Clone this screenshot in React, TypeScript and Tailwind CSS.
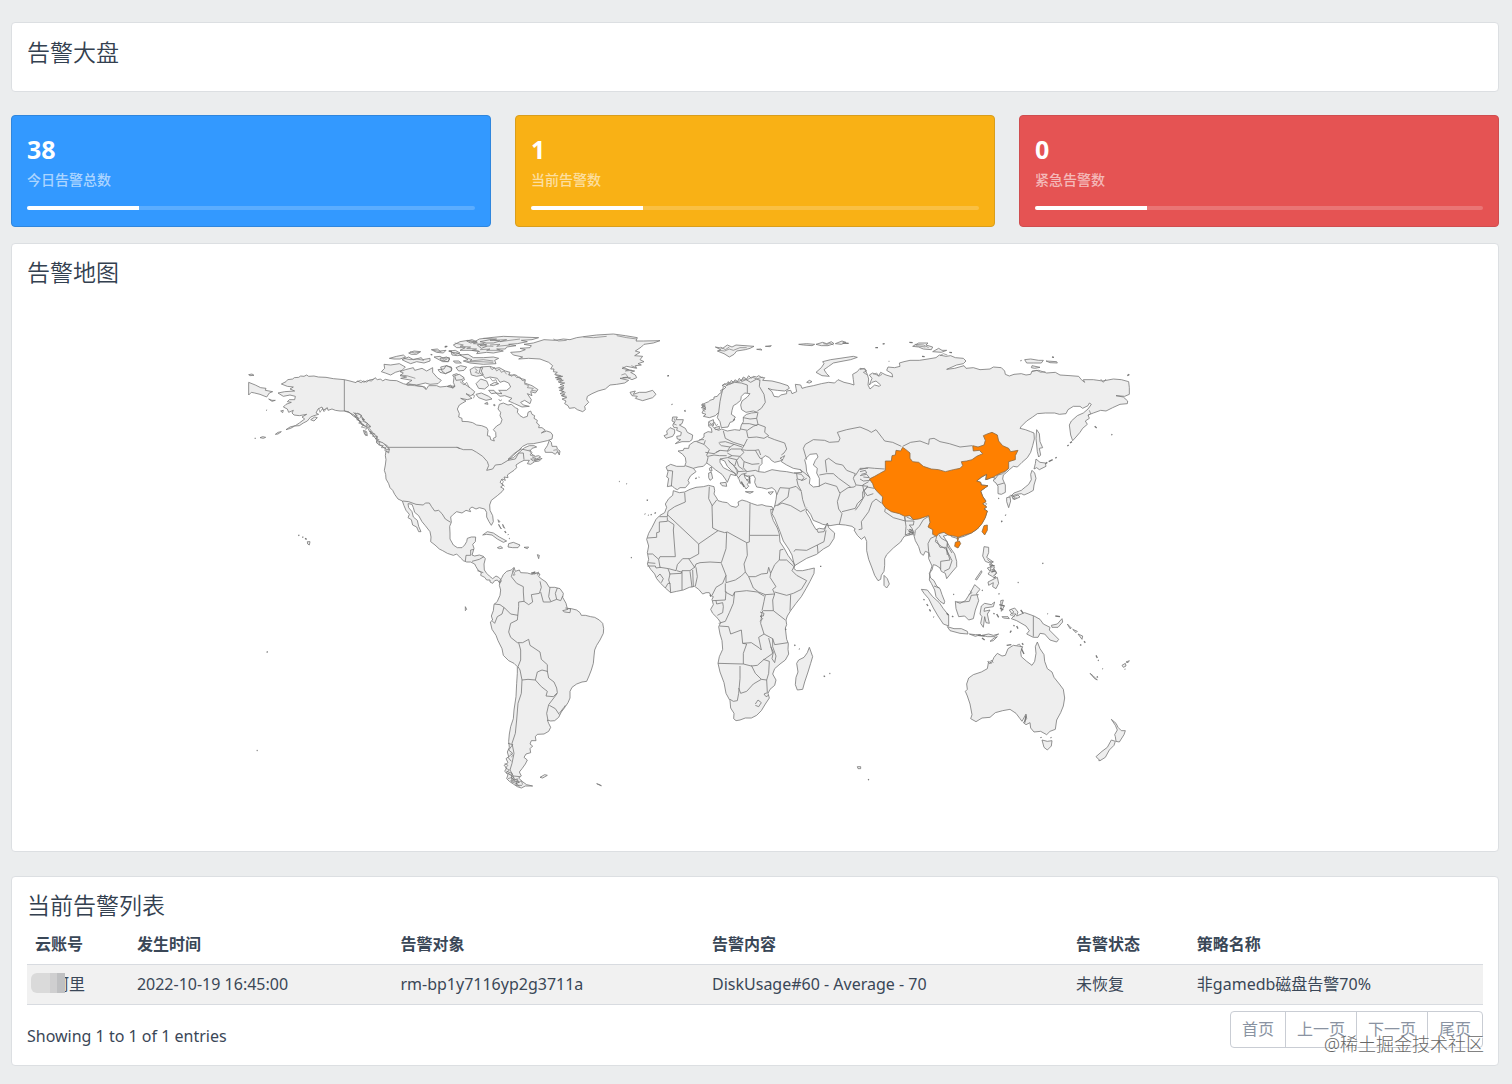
import React from "react";

type Sheet = "A" | "B" | "C" | "D" | "E" | "F" | "G";
type Run = [Sheet, string];

/* Origin of each map sheet in the coordinate space of the whole drawing. */
const ORIGIN: Record<Sheet, [number, number]> = {
  A: [0, 0],
  B: [600, 0],
  C: [1200, 0],
  D: [1860, 0],
  E: [600, 645],
  F: [1200, 465],
  G: [1830, 525],
};

function trace(...runs: Run[]): string {
  return runs
    .flatMap(([sheet, points]) =>
      points
        .trim()
        .split(/\s+/)
        .map((p) => {
          const [x, y] = p.split(",").map(Number);
          return `${x + ORIGIN[sheet][0]} ${y + ORIGIN[sheet][1]}`;
        }),
    )
    .join("L");
}

const MAINLANDS: Run[][] = [
  // North and Central America
  [
    ["A", "124,177 138,170 143,164 158,162 163,158 176,157 182,153 192,154 200,150 206,154 222,153 235,156 258,157 280,161 313,164 330,168 348,173 352,168 364,173 370,168 380,171 388,165 400,163 405,158 412,164 422,162 428,168 436,163 450,166 470,167 490,176 505,180 520,176 530,182 555,186 558,194 566,182 590,182 600,186 620,184 636,188 645,183"],
    ["B", "22,184 32,180 38,190 45,184 40,172 42,158 38,150 50,146 60,152 70,157 74,164 66,168 72,176 84,184 92,190 104,200 100,208 92,212 78,206 96,220 82,224 62,220 78,228 68,234 58,240 52,252 58,266 56,276 66,280 66,289 84,290 98,293 110,300 125,302 140,308 144,316 142,332 150,334 152,344 163,348 160,340 168,336 167,322 160,314 170,303 182,296 186,284 180,272 182,262 174,252 178,238 190,234 204,240 214,238 226,248 234,252 232,262 240,272 250,278 262,274 264,262 272,258 276,268 284,272 282,280 292,286 290,294 298,300 296,308 306,308 316,316 304,324 320,318 332,322 338,330 336,342 322,347 300,352 280,356 262,357 248,364 236,376 222,386 204,403 220,398 240,380 254,368 268,362 282,362 290,366 276,370 270,378 276,388 286,394 296,392 302,396 290,402 272,402 280,408 294,404 306,400 298,408 284,410 272,418 262,416 268,406 252,406 240,412 228,420 230,428 222,436 210,444 202,450 204,458 192,456 196,466 186,462 180,472 190,480 182,486 192,492 186,500 172,512 154,526 149,540 150,556 158,572 160,590 154,601 147,590 140,576 140,562 134,552 118,548 108,552 96,546 88,552 92,560 78,556 66,564 50,560 40,568 32,576 34,592 29,604 30,624 30,642 40,660 52,668 66,668 74,660 80,650 82,640 94,636 107,636 106,650 98,658 102,670 98,684"],
    ["E", "96,45 104,48 118,45 130,49 136,56 132,72 133,90 140,100 148,108 158,116 168,108 176,112 182,118 184,124 178,128 172,120 164,122 158,130 150,126 150,120 140,120 134,112 122,106 124,98 114,90 108,80 104,72 92,66 80,66 70,62 62,54 50,42 40,46 22,40 8,32 0,28"],
    ["A", "598,672 585,660 572,650 573,636 570,620 556,602 546,590 536,572 524,562 520,548 516,538 504,536 506,548 516,560 520,576 532,586 536,604 543,620 536,620 530,606 518,600 514,584 504,578 508,568 498,556 492,542 487,528 474,522 464,508 458,496 450,488 446,476 438,462 437,448 433,436 436,420 438,404 436,392 438,378 446,384 448,372 442,362 430,356 418,350 410,346 412,338 400,330 390,322 384,310 376,304 366,300 360,288 354,284 342,270 330,264 314,258 300,258 286,256 276,252 264,256 262,248 250,256 246,246 234,252 228,264 236,268 222,272 212,276 202,288 190,294 178,302 164,303 152,310 138,314 150,306 166,302 178,294 194,282 186,276 200,268 178,272 162,270 156,264 160,256 146,262 142,252 130,246 138,238 154,232 142,230 148,224 164,224 166,214 150,210 130,214 114,204 134,200 164,198 150,192 160,186 142,184"],
  ],
  // South America
  [["E", "180,122 186,112 190,104 200,94 214,90 222,82 226,94 238,90 242,98 262,99 276,103 290,99 300,102 296,110 306,118 318,126 328,142 344,142 360,146 370,160 368,172 378,190 382,206 394,206 410,210 420,218 424,226 436,226 452,230 464,232 478,240 488,250 491,266 490,280 480,300 470,316 464,330 462,348 460,370 454,390 447,408 440,424 426,426 410,432 396,442 390,454 390,474 384,488 376,500 364,516 356,532 344,542 332,543 322,540 326,550 332,562 326,574 312,582 292,583 286,590 288,602 274,602 270,612 278,618 270,626 272,638 258,642 252,652 262,660 256,672 246,686 238,696 244,708 236,714 246,724 260,734 278,738 256,738 244,744 232,740 220,732 208,724 200,716 204,704 194,694 200,684 192,676 204,668 198,656 206,650 202,636 208,622 206,604 208,582 212,560 220,536 222,510 228,470 230,430 232,400 232,380 222,370 206,362 190,346 186,326 174,302 168,286 156,268 151,246 158,240 154,228 160,212 162,194 172,184 180,166 182,150 178,136"]],
  // Africa
  [["F", "100,32 118,38 134,36 150,28 168,22 190,20 206,16 222,20 224,32 222,42 230,54 234,62 248,66 262,68 272,78 288,82 296,76 294,66 306,60 320,64 334,70 352,76 366,74 378,78 396,80 400,90 392,88 394,104 400,122 412,144 418,162 420,186 432,204 444,226 460,248 464,256 462,266 470,272 488,272 506,268 523,264 522,280 510,304 498,326 484,350 468,370 452,392 442,408 438,420 440,434 436,444 438,462 440,478 445,490 444,508 446,522 436,540 420,552 404,566 398,582 408,600 404,616 390,628 384,640 388,654 376,672 364,692 350,706 334,714 316,714 300,720 288,722 281,716 282,700 272,684 270,662 258,640 252,608 240,576 234,550 238,530 248,508 246,482 240,462 236,440 242,428 234,416 218,400 212,388 220,374 216,358 220,350 212,346 208,338 198,338 188,342 176,328 164,319 148,322 130,330 110,334 92,338 76,324 62,310 50,296 44,282 32,268 22,252 26,238 22,218 26,198 20,178 26,160 36,142 48,118 60,106 74,98 80,82 76,72 86,56 98,46"]],
  // Europe and Asia
  [
    ["C", "104,490 96,482 82,485 86,460 80,456 84,440 78,426 92,418 110,424 134,424 138,412 136,398 128,388 114,378 130,376 132,370 146,370 148,360 162,350 174,348 182,344 192,336 192,326 204,320 216,322 214,310 206,304 206,290 220,284 222,296 218,304 226,312 236,316 244,312 262,318 284,314 300,316 304,300 310,290 310,276 320,268 334,264 352,262 340,258 318,262 305,254 302,240 306,228 322,216 330,206 314,204 304,214 302,226 290,236 280,242 276,256 274,268 286,276 278,290 270,292 264,306 244,308 240,290 232,278 236,262 226,272 208,278 190,274 198,268 186,264 190,256 198,252 184,248 196,244 184,240 196,234 206,230 210,226 222,222 222,216 232,214 236,208 244,202 242,196 252,192 258,186 246,182 254,176 260,180 264,178 264,170 270,174 274,166 280,172 286,164 292,170 298,160 304,168 310,156 320,162 326,152 334,160 340,154 350,156 356,152 366,158 374,158 368,166 396,168 420,174 444,182 448,190 434,198 412,196 396,194 384,190 396,200 402,214 416,216 422,210 440,206 440,198 452,196 456,206 470,200 468,190 466,178 482,180 486,190 500,186 520,182 544,176 566,172 584,174 594,164 612,172 630,176 642,180 640,164 638,148 652,140 660,130 674,132 682,148 686,162 684,180 690,192"],
    ["D", "44,180 58,184 62,180 48,168 36,172 28,180 36,160 28,150 38,144 56,152 62,142 78,150 98,156 96,146 80,136 84,126 104,128 120,124 118,114 132,110 150,106 178,106 204,102 228,98 238,90 258,94 272,92 286,98 310,100 318,108 310,116 290,120 260,133 284,130 312,122 318,130 340,128 360,134 390,132 400,126 424,128 434,138 436,148 448,153 462,148 484,146 498,150 512,148 516,138 536,136 560,144 586,142 600,150 630,152 656,154 664,164 674,172 670,164 700,164 728,168 760,162 784,164 806,170 808,188 808,208 794,214 768,212 790,216 803,228 802,236 780,238 758,248 738,258 722,256 700,264 684,270 688,280 676,288 682,298 668,310 660,322 648,336 638,347 632,330 628,300 634,288 652,272 670,264 684,252 694,238 688,234 684,242 668,250 660,244 640,244 624,254 618,266 598,268 584,264 556,264 532,266 518,276 500,288 484,304 480,310 496,314 512,320 522,324 523,342 518,362 512,382 502,398 486,412 472,426 460,424 448,434 440,442 430,450 428,462 436,480 436,502 424,508 414,506 414,484 408,474 400,468 404,458 394,456 384,462 376,464 380,448 366,456 350,468 362,472 364,480 384,482 376,488 362,498 368,514 378,528 368,536 380,546 372,552 382,558 376,576 366,594 352,612 334,624 312,634 290,640"],
    ["G", "318,114 304,110 300,98 290,106 280,108 288,120 300,142 314,162 320,184 320,200 306,216 290,236 286,220 274,214 270,204 258,196 250,194 246,210 238,220 242,234 252,242 260,258 270,266 276,284 284,304 282,312 270,304 258,290 254,270 244,250 238,240 240,216 246,198 236,176 236,158 226,154 220,166 212,160 206,140 196,122 190,100 176,106 164,108 158,116 152,126 130,144 110,164 104,176 104,196 102,214 94,226 92,238 84,242 74,226 66,204 56,178 50,152 50,124 44,110 34,118 22,106 12,90"],
    ["C", "646,612 636,604 616,600 594,598 570,602 548,598 540,594 520,586 512,568 500,552 498,560 510,580 516,594 528,614 538,610 552,612 558,602 562,594 566,608 584,624 582,640 568,662 550,672 530,688 500,700 480,712 464,722 460,708 456,690 446,672 430,648 420,620 412,600 404,580 396,566 400,552 404,544 408,524 410,508 406,496 396,488 380,492 364,488 350,486 344,472 346,460 340,450 326,456 312,448 316,460 328,470 322,478 326,484 318,492 310,478 302,476 296,460 288,448 274,436 262,424 254,408 240,402 240,412 250,428 262,434 284,444 288,452 272,448 268,458 262,472 256,462 246,448 226,434 212,422 200,414 190,424 174,426 160,430 168,440 152,452 144,466 148,474 136,488 120,488 112,494"],
  ],
  // Greenland
  [["B", "212,82 240,80 256,74 240,70 270,68 274,62 252,58 280,54 312,44 346,46 370,42 390,44 410,38 438,34 470,30 520,27 556,32 592,38 588,48 610,48 660,47 640,54 612,58 604,66 586,78 600,82 584,92 608,94 600,104 612,110 594,116 604,120 586,122 590,130 560,124 546,130 584,138 572,142 586,150 590,158 576,164 562,158 540,160 566,166 554,174 530,178 510,180 496,192 474,198 456,206 442,214 440,224 446,232 434,244 436,254 428,260 412,254 404,248 388,250 384,242 374,236 378,228 366,222 380,218 364,212 374,208 360,206 372,200 358,196 370,192 356,188 372,182 360,178 374,174 356,172 370,166 350,164 364,160 346,158 368,154 350,152 344,148 352,142 340,140 342,132 332,132 338,122 326,112 300,102 266,100 236,102 248,96 220,90"]],
  // Australia
  [["G", "562,426 570,446 582,464 584,484 592,506 606,516 612,532 628,552 640,568 644,594 640,618 632,638 620,660 616,688 600,694 590,704 572,694 552,696 542,684 540,668 528,674 520,668 530,656 528,642 516,664 510,656 498,640 480,628 458,632 436,638 420,652 396,654 378,665 362,656 366,644 360,612 352,588 346,574 352,568 350,552 356,534 370,524 394,516 412,506 416,484 424,490 432,472 442,460 456,468 466,466 474,446 490,436 518,440 512,456 514,470 530,484 546,496 554,484 558,460 556,440"]],
  // Madagascar
  [["F", "508,502 518,530 512,550 504,576 494,606 488,628 472,630 466,614 468,592 474,576 470,550 476,540 492,532 502,518"]],
];

const ISLANDS: Run[] = [
  // Bering Strait and Alaska
  ["A", "26,172 46,180 62,188 78,190 76,196 98,200 88,204 80,216 60,208 44,204 34,202 26,210"],
  ["A", "86,222 96,226 106,226 96,229"],
  ["A", "122,258 130,256 128,263"],
  ["A", "212,284 224,276 232,278 222,288"],
  ["A", "106,328 114,322 124,320 114,327"],
  ["A", "26,149 36,147 42,151 30,152"],
  ["A", "60,338 68,335 77,337 70,340"],
  ["A", "344,264 360,268 372,284 366,282 378,292 392,304 386,308 370,300 356,284"],
  ["A", "370,316 380,320 382,332 374,328"],
  ["A", "390,318 402,326 412,336 408,342 398,330"],
  ["A", "410,346 430,354 448,374 440,374 420,360 410,354"],
  // Arctic archipelago, west
  ["A", "432,118 452,120 478,116 496,126 486,136 466,142 452,150 436,144 424,140 434,130"],
  ["A", "496,134 520,128 524,136 546,130 560,138 578,128 578,142 592,158 604,166 594,176 570,178 556,174 530,180 500,176 516,166 482,160 500,156 480,152 490,144 480,140"],
  ["A", "448,100 470,94 490,90 497,96 480,102 462,102"],
  ["A", "486,104 506,96 520,104 544,98 548,104 570,100 570,108 552,114 530,110 512,116 498,110"],
  ["A", "506,84 522,78 542,80 530,88 514,88"],
  ["A", "574,74 592,72 600,78 618,76 610,84 590,82"],
  ["A", "582,96 600,94 610,100 628,98 626,110 608,110"],
  ["A", "594,134 612,132 618,122 634,126 634,138 616,146 600,142"],
  ["A", "628,78 646,76 660,84 646,88"],
  // Arctic archipelago, east
  ["B", "40,60 60,50 84,46 104,50 118,42 150,38 190,34 240,36 296,38 276,44 244,46 262,50 232,56 206,58 228,62 200,66 196,72 170,72 190,78 160,84 140,82 110,86 116,78 90,76 60,76 76,68 50,68"],
  ["B", "80,48 96,44 110,50 92,54"],
  ["B", "112,60 132,56 140,64 124,70"],
  ["B", "120,50 150,44 180,48 160,54 140,54"],
  ["B", "60,90 84,88 100,98 130,98 160,96 176,100 164,106 168,116 130,118 90,114 70,108 84,104"],
  ["B", "0,100 20,96 30,102 22,110 4,106"],
  ["B", "34,82 52,84 64,90 52,92 36,90"],
  ["B", "40,108 56,108 64,114 46,114"],
  ["B", "48,128 62,122 80,126 72,136 56,138"],
  ["B", "2,126 20,122 36,130 34,138 16,146 6,138"],
  ["B", "44,152 58,148 72,158 66,164 48,166"],
  ["B", "90,134 104,126 128,128 124,138 130,150 110,154 94,150"],
  ["B", "122,126 150,124 166,130 178,128 196,138 210,142 206,150 228,150 240,160 256,164 254,174 276,182 294,194 286,204 272,200 276,212 262,206 274,224 270,236 254,226 242,232 250,240 268,244 246,246 224,236 206,228 216,220 194,212 180,214 168,204 186,206 176,196 200,196 212,186 206,174 192,168 180,172 172,160 150,156 136,160 130,152 118,142"],
  ["B", "108,176 122,162 140,168 146,182 134,192 116,190"],
  ["B", "150,180 164,172 176,176 160,182"],
  ["B", "108,208 124,204 146,214 156,222 138,226 116,218"],
  ["B", "146,196 162,196 168,204 154,206"],
  ["B", "134,236 142,232 144,238"],
  ["B", "160,240 164,238 165,243"],
  // Newfoundland
  ["B", "328,346 322,362 314,374 316,382 336,382 346,388 352,380 358,390 360,378 352,372 350,364 336,364 334,352"],
  // Iceland
  ["B", "570,202 586,198 580,208 598,202 618,202 638,196 648,208 638,218 608,227 586,220 592,214 576,212"],
  // Britain and Ireland
  ["C", "98,276 112,276 108,284 130,284 126,296 118,300 136,310 142,322 158,330 156,344 148,350 126,350 106,356 122,344 112,342 110,334 122,332 124,322 110,316 112,308 102,308 98,300 104,292 96,288"],
  ["C", "80,318 90,308 104,314 104,324 98,334 78,340 72,332 82,328"],
  // Denmark
  ["C", "224,308 238,304 238,312 226,314"],
  // Svalbard
  ["C", "226,66 248,70 262,60 276,66 288,60 342,64 330,70 316,74 290,78 282,88 268,96 252,86 232,78 242,74"],
  ["C", "350,73 362,72 366,75"],
  ["C", "376,64 394,62 390,65"],
  // Franz Josef Land
  ["C", "476,58 500,56 524,58 516,62 490,60"],
  ["C", "528,58 548,52 560,56 574,50 582,56 564,62 544,62"],
  ["C", "586,56 606,48 618,52 604,58"],
  // Novaya Zemlya
  ["C", "528,142 544,128 552,116 548,110 572,104 600,100 640,94 652,97 632,104 600,110 580,114 566,124 552,134 560,146 568,154 546,152"],
  ["C", "500,172 508,166 516,170 508,174"],
  // Severnaya Zemlya
  ["D", "158,64 176,54 204,54 198,60 218,66 214,74 190,72 176,66"],
  ["D", "218,80 236,70 246,76 260,76 244,82"],
  // New Siberian Islands
  ["D", "494,104 512,102 536,106 550,106 544,114 520,114 500,114"],
  ["D", "516,122 540,127 524,130 514,128"],
  ["D", "558,108 590,110 592,114 570,113"],
  // Sakhalin, Japan, Taiwan
  ["D", "530,314 538,326 540,350 548,368 538,370 542,390 536,396 532,380 530,360 528,340"],
  ["D", "528,402 540,412 556,414 558,424 538,434 530,428 522,432 526,416"],
  ["D", "516,436 524,444 528,460 522,480 520,496 506,504 492,510 484,506 470,508 452,514 462,504 484,496 496,486 506,478 514,464 512,448"],
  ["D", "440,518 450,516 452,528 446,548 440,530"],
  ["D", "456,516 474,510 480,516 462,524"],
  // Sri Lanka
  ["G", "102,226 112,236 118,252 110,264 102,256"],
  // Philippines
  ["G", "402,140 416,142 416,158 410,172 430,186 422,190 406,184 398,168 400,156"],
  ["G", "412,204 424,200 420,212 432,206 440,220 428,230 414,222 420,214"],
  ["G", "414,246 426,240 442,232 446,250 438,266 428,260 430,248 416,256"],
  ["G", "376,238 394,212 396,216 380,240"],
  // Sumatra, Java, Timor
  ["G", "214,268 232,270 248,290 268,308 280,326 296,346 296,378 280,372 264,348 250,324 236,296 222,280"],
  ["G", "292,380 312,386 334,386 352,394 354,402 330,400 300,392"],
  ["G", "358,402 376,404 392,404 376,409"],
  ["G", "396,406 416,402 430,406 446,402 432,410 412,410"],
  ["G", "420,424 432,414 442,410 430,422"],
  // Borneo
  ["G", "316,304 330,310 346,302 360,280 374,254 390,268 380,280 386,302 376,330 370,356 356,360 344,348 326,350 318,326"],
  // Sulawesi
  ["G", "394,318 404,310 424,314 434,306 430,320 404,324 402,334 420,330 412,342 418,370 408,368 404,350 400,382 392,370 396,350 390,342"],
  ["G", "452,302 460,300 456,314 462,320 454,334"],
  ["G", "456,350 474,350 478,356 460,354"],
  // New Guinea
  ["G", "478,330 494,324 504,336 500,348 524,338 552,348 570,358 580,372 600,382 598,390 610,402 626,418 620,426 600,420 584,402 570,400 564,412 550,412 530,402 538,392 528,378 500,362 484,356 498,342 486,342"],
  ["G", "604,376 622,372 636,356 638,366 624,382 606,382"],
  // Pacific
  ["G", "652,372 664,384 660,386"],
  ["G", "668,388 682,394 678,398"],
  ["G", "684,402 698,408 696,418"],
  ["G", "720,520 730,528 742,540 734,536"],
  ["G", "816,496 826,490 828,498 820,502"],
  ["G", "828,486 838,482 834,488"],
  // New Zealand
  ["G", "784,658 798,670 804,682 814,692 826,692 822,704 808,726 798,724 796,710 794,704 802,690 796,676"],
  ["G", "784,720 796,724 792,736 778,750 766,772 750,782 738,770 756,754 772,742"],
  // Tasmania
  ["G", "576,720 592,724 606,722 604,738 592,750 582,742"],
  // Caribbean
  ["B", "128,630 142,620 160,624 178,636 200,648 190,652 172,642 156,630 140,628"],
  ["B", "206,656 220,652 240,660 234,668 218,668 204,666"],
  ["B", "172,668 182,664 188,669 178,671"],
  ["B", "252,667 266,666 262,671"],
  ["B", "174,584 180,590 176,592"],
  ["B", "176,598 184,612 178,604"],
  ["B", "188,598 194,610 190,606"],
  ["E", "300,712 314,704 322,706 308,714"],
  ["E", "470,731 482,735 484,738"],
  ["E", "292,44 298,46 296,56"],
  ["E", "76,200 80,208 76,212"],
  // Mediterranean
  ["C", "206,444 214,442 218,460 210,466 206,458"],
  ["C", "208,430 214,426 216,438 210,438"],
  ["C", "240,474 258,472 260,484 246,482"],
  ["C", "316,500 340,500 330,505"],
  ["C", "384,502 400,500 392,509"],
  ["A", "202,650 210,650 208,660 203,657"],
  ["G", "22,800 32,800 32,806 24,806"],
];

const CHINA: Run[] = [
  ["D", "28,462 44,454 58,446 76,436 76,408 94,408 96,392 106,390 108,376 122,378 128,367 138,374 150,384 150,400 158,410 176,412 190,424 214,432 236,434 256,440 280,434 300,430 308,422 304,410 320,408 336,404 350,394 368,386 358,376 340,378 338,362 354,366 372,360 376,346 370,332 384,326 396,322 412,330 416,348 428,362 446,370 452,380 474,376 466,392 466,404 446,410 446,430 436,438 418,446 400,456 384,462 378,464 380,448 364,456 350,468 362,472 364,480 384,482 376,488 362,498 368,514 378,530 368,536 380,546 372,552 382,558 376,578 366,596 352,612 334,624 314,630 294,637 286,634 264,630 252,622 236,626 230,634 218,628 218,614 204,606 210,592 206,572 194,576 176,582 160,584 150,572 134,574 118,566 94,560 76,548 66,534 68,516 52,500 42,488 38,476"],
  ["D", "372,602 382,600 382,616 374,630 366,620"],
  ["D", "286,652 298,648 302,656 294,669 284,664"],
  ["D", "291,638 296,640 293,648"],
];

/* Black Sea and Caspian Sea. */
const SEAS: Run[] = [
  ["C", "356,440 358,424 366,416 366,400 376,392 388,398 394,406 404,412 420,408 428,404 420,400 434,392 430,400 424,410 440,420 460,430 482,434 486,442 460,444 440,440 420,438 396,434 374,442"],
  ["C", "494,404 510,388 530,386 534,396 526,406 520,420 532,430 530,444 538,460 538,484 520,486 508,476 510,460 500,440 498,420"],
];

const BORDERS: Run[] = [
  // Alaska, Canada, USA, Mexico
  ["A", "313,164 313,258 326,260 336,270 350,280 364,296"],
  ["A", "446,367 652,367 660,371"],
  ["B", "50,367 70,374 96,374 110,382 128,394 142,410 146,422 140,436 158,432 166,420 184,418 204,406 226,402 236,384 250,384 252,404"],
  ["B", "204,406 232,380 244,372 270,378"],
  ["A", "488,528 506,530 528,538 550,540 556,534 568,534 574,544 584,558 596,556 606,566 616,582 632,592"],
  ["E", "76,64 78,46 92,46 92,30 102,28"],
  ["E", "96,64 118,58 132,50"],
  ["E", "112,92 130,98"],
  // South America
  ["E", "180,122 180,130"],
  ["E", "222,84 214,110 230,130 250,140 250,156 252,184 236,186 236,200 232,240"],
  ["E", "252,184 266,194 278,186 274,164 298,160 304,142 300,124"],
  ["E", "302,156 310,186 330,186 350,178 362,182 368,168"],
  ["E", "330,142 326,170 332,184"],
  ["E", "352,144 346,160 350,178"],
  ["E", "162,192 180,194 194,204 212,222 234,226"],
  ["E", "192,202 186,222 172,230 164,250 156,242"],
  ["E", "232,240 212,250 206,276 212,292 232,308 248,308 266,298 270,316 300,336 304,358 322,374 322,396"],
  ["E", "236,308 242,330 242,360 234,380 240,390 246,420 264,418 286,420 292,396 306,390 322,394 326,414 342,426 350,444 352,458 340,470 318,468 322,454 304,440 286,420"],
  ["E", "246,420 244,460 234,490 230,540 226,580 216,610 222,640 216,670 210,690 220,708 240,710"],
  ["E", "352,460 326,494 320,520 324,542"],
  ["E", "328,496 346,506 358,524"],
  ["E", "200,694 216,700 214,716 232,720 228,736 246,736"],
  ["E", "204,610 218,614 206,630 218,640 204,652 214,664"],
  ["E", "204,700 222,712 212,722 238,726 226,732"],
  ["E", "376,204 392,206 390,218 374,216 368,212 384,208"],
  ["E", "358,520 372,502 376,496"],
  // North and West Africa
  ["F", "134,38 136,66 104,80 84,94 82,110 58,110"],
  ["F", "82,104 176,192 234,152 218,144 216,76 206,56 208,20"],
  ["F", "216,78 230,60"],
  ["F", "82,112 82,124 58,126 58,156 50,158 50,172 22,174"],
  ["F", "102,134 100,150 106,230 60,230 56,238 38,222 24,222"],
  ["F", "102,134 84,122"],
  ["F", "176,192 176,222 150,236 128,236 112,254 108,272 86,266 60,262 56,238"],
  ["F", "234,152 254,158 262,156 320,188 328,186 330,70"],
  ["F", "330,166 416,166"],
  ["F", "260,156 258,206 244,248 210,246 180,248 168,252 164,262 146,236"],
  ["F", "168,262 172,290 166,318"],
  ["F", "320,188 322,226 312,252 316,276 304,288 286,300 258,308 258,286 244,250"],
  ["F", "258,286 248,310 228,322 216,346"],
  ["F", "24,248 46,250"],
  ["F", "22,258 46,258 48,264 62,262"],
  ["F", "84,266 90,282 86,300 90,312"],
  ["F", "88,282 124,280 126,272 150,272 166,260"],
  ["F", "126,274 126,330"],
  ["F", "150,274 156,322"],
  ["F", "158,270 160,320"],
  ["F", "50,292 60,282 70,296 64,308"],
  ["F", "76,324 84,310 90,310 92,338"],
  ["F", "110,272 124,276"],
  // East and Central Africa
  ["F", "316,276 326,290 346,290 364,282 382,280 386,262 392,280 390,292 408,320 398,328 404,342 376,344 356,336 340,324 326,290"],
  ["F", "392,280 404,254 418,240 420,210 430,208"],
  ["F", "418,240 440,240 462,260 456,272 470,286 500,302 484,328 460,340 440,346 404,336"],
  ["F", "452,344 450,392"],
  ["F", "404,342 398,360 400,392 436,420"],
  ["F", "400,392 370,392 366,396 362,430 372,462 398,476 404,494 444,488"],
  ["F", "376,344 372,364 366,392"],
  ["F", "256,310 256,336 278,348 284,336 320,332 352,336 372,348"],
  ["F", "218,362 256,360 258,334"],
  ["F", "284,336 280,370 268,398 256,424 236,430"],
  ["F", "228,362 230,372 248,368 250,380 248,398 232,406"],
  ["F", "238,438 266,440 272,462 304,450 308,490 334,488 358,504 364,510 356,472 372,462"],
  ["F", "308,490 320,492 310,520 310,552 234,550"],
  ["F", "310,552 334,558 352,556 370,540 390,526 398,520 386,474"],
  ["F", "398,476 398,500 408,528 404,548 396,536 400,516 392,500"],
  ["F", "300,558 300,596 296,640 292,662 280,664 270,658"],
  ["F", "334,556 346,580 364,598 340,612 320,634 302,640 296,624"],
  ["F", "370,538 388,544 386,580 380,600 364,598"],
  ["F", "380,600 382,638 372,642 378,650 386,646"],
  ["F", "346,672 354,660 364,668 356,680 346,676"],
  ["F", "360,396 372,400 370,408 360,408 368,416 360,424"],
  // Arabia and the Middle East
  ["C", "410,510 420,488 448,490 444,516 412,540 402,544"],
  ["C", "412,542 426,534 452,542 482,560 494,554 500,548"],
  ["C", "448,490 468,484 484,500 488,524 496,548"],
  ["C", "470,462 474,480 484,498"],
  ["C", "462,680 466,674 500,676 532,660 534,684"],
  ["C", "532,660 552,650 558,616"],
  ["C", "530,612 534,622 552,620 558,604"],
  ["C", "470,446 472,462 488,466 500,460"],
  ["C", "480,434 494,444 510,458"],
  ["C", "462,444 484,448 492,458 484,468"],
  ["C", "536,484 556,474 590,484 600,506 592,530 596,552 606,566 598,598"],
  ["C", "600,504 624,488 642,486 650,480 684,484 668,500 668,520 652,536 646,550 606,560"],
  ["C", "538,450 560,446 580,446 596,460 632,486"],
  ["C", "560,442 556,406 566,400 588,416 608,420 620,436 646,446 640,460 648,480"],
  ["C", "500,404 490,370 496,358 520,344 554,346 568,352 596,350 600,340 592,322 620,314 660,306 684,316"],
  ["D", "24,316 34,322 48,314 68,340 74,348 98,352 124,364"],
  ["C", "646,452 660,430 684,430"],
  ["D", "0,434 22,428 44,430 74,432"],
  ["D", "0,452 20,448 28,458 10,456"],
  ["D", "0,440 16,436 20,444 4,448"],
  // South and East Asia
  ["D", "30,466 10,468 0,462"],
  ["D", "42,490 22,486 12,498 22,512 40,506"],
  ["D", "64,534 48,522 36,532 26,560 4,590 6,612 -4,614"],
  ["D", "26,470 8,480 14,512 -2,540 -14,556"],
  ["D", "76,550 74,560 100,578 136,588 134,574"],
  ["D", "136,588 162,588 160,600 148,600 156,610 162,624 150,624 136,630 138,604 134,576"],
  ["D", "140,576 158,584 172,578"],
  ["D", "206,574 190,584 178,604 166,616 164,632"],
  ["D", "230,632 212,640 204,656 206,680 210,696"],
  ["D", "230,634 226,650 244,664 260,674 262,690"],
  ["D", "236,628 244,640 262,650 262,662 276,684"],
  ["G", "260,120 270,142 288,142 300,180 272,184 272,208"],
  ["G", "292,130 290,150 306,182 298,206 282,214"],
  ["G", "252,258 268,264"],
  ["D", "128,364 152,352 180,348 206,358 208,342 222,340 240,350 268,356 300,366 336,362"],
  ["D", "404,464 414,450 428,446 446,430"],
  ["D", "412,480 432,474"],
  ["G", "320,306 340,306 358,304 364,286 386,284"],
  ["G", "550,348 550,410"],
  // Europe
  ["C", "250,186 244,210 240,230 236,262"],
  ["C", "258,182 284,172 304,174 322,180 322,204"],
  ["C", "304,170 318,164 332,172 350,162 360,166"],
  ["C", "360,164 358,184 372,208 376,232 364,250 352,258"],
  ["C", "354,262 350,280 354,298"],
  ["C", "310,278 330,282 350,280"],
  ["C", "306,296 328,296 352,302"],
  ["C", "302,312 322,316 340,304 354,298 376,306 374,322 386,332 372,340 350,336 324,338 320,318"],
  ["C", "384,336 404,344 434,354 440,372 432,384 424,390"],
  ["C", "250,318 256,340 280,352 312,362 322,342"],
  ["C", "312,362 304,374 320,376 346,376 360,400 366,400"],
  ["C", "346,376 356,374 362,390"],
  ["C", "238,352 256,350 282,358 270,366 244,362 236,354"],
  ["C", "282,358 306,366"],
  ["C", "228,382 240,376 262,378 270,366"],
  ["C", "262,380 274,372 302,372 312,382 300,394 276,392 262,384"],
  ["C", "300,394 312,410 336,418 358,416"],
  ["C", "312,410 310,428 320,440 346,436 356,440"],
  ["C", "298,396 290,406 296,424 310,434"],
  ["C", "264,398 290,404 284,424 266,408"],
  ["C", "286,426 294,438 290,450"],
  ["C", "294,440 320,438"],
  ["C", "294,460 304,448 320,444"],
  ["C", "240,402 262,398 276,392"],
  ["C", "196,346 192,358 208,374 200,390 204,398 200,414"],
  ["C", "196,382 222,386 240,376"],
  ["C", "204,394 222,390 238,392 260,392"],
  ["C", "170,350 186,356 192,358"],
  ["C", "178,344 192,344"],
  ["C", "136,422 160,430"],
  ["C", "84,436 98,438 94,484"],
  ["C", "206,300 222,300"],
];

/* Fjords, channels and broken coasts, drawn over the outlines. */
const INLETS: Run[] = [
  ["A", "340,262 352,272 344,274 358,280 350,284 364,290 356,294 372,300 364,306 380,310 376,316"],
  ["A", "352,264 366,272 360,276 374,284 368,288 384,296 378,300 392,306"],
  ["A", "388,310 396,320 390,326 404,326 398,334 412,334 406,342 418,344"],
  ["A", "408,350 420,352 416,360 430,362 424,368 438,368 434,376 446,380"],
  ["A", "372,320 378,322 374,326 380,330 376,332"],
  ["A", "236,250 240,262 248,250 252,260 260,250"],
  ["A", "350,170 362,166 372,172 382,166 394,168 404,160"],
  ["A", "480,150 500,152 520,158 526,160"],
  ["A", "500,180 524,182 548,184 556,192"],
  ["A", "490,100 510,104 530,102 552,106"],
  ["A", "510,80 524,84 538,82"],
  ["A", "580,76 604,80"],
  ["A", "606,100 612,106 622,102"],
  ["B", "44,54 70,60 60,64 92,66 80,70 110,72 96,76 120,80"],
  ["B", "86,50 112,52 100,56 140,58 120,62 160,64"],
  ["B", "130,40 170,42 150,46 200,44 180,50 240,42"],
  ["B", "150,60 180,58 170,64 210,60"],
  ["B", "120,74 150,72 140,76 180,76"],
  ["B", "70,96 96,104 90,108 130,104 160,108"],
  ["B", "80,110 120,110 160,112"],
  ["B", "104,130 112,136 106,142 118,146"],
  ["B", "150,126 156,134 164,128 170,138 178,132 184,142 192,138 200,148"],
  ["B", "206,148 216,154 222,148 230,158 240,156 246,166 256,168"],
  ["B", "252,176 266,182 262,188 280,190 274,196 290,198"],
  ["B", "60,170 72,180 80,172 88,188"],
  ["B", "150,158 158,168 168,164 172,176"],
  ["B", "96,208 104,212 100,220"],
  ["B", "176,222 180,228 186,224"],
  ["B", "346,148 362,152 350,158 366,164 354,170"],
  ["B", "360,186 372,188 364,198 376,202 366,212 380,214"],
  ["B", "544,150 556,146 564,156 548,158 572,158"],
  ["B", "548,126 566,134 556,138 576,136"],
  ["B", "574,122 588,128"],
  ["B", "430,36 460,38 500,34"],
  ["B", "530,32 560,38 590,42"],
  ["B", "340,42 356,48 380,46"],
  ["B", "184,462 190,470 186,478 194,484"],
  ["B", "276,396 288,400 282,406 300,402"],
  ["B", "268,374 276,382 270,390 284,394"],
  ["B", "340,376 350,374 356,384"],
  ["C", "186,236 196,240 186,244 198,248 188,254 196,260"],
  ["C", "246,182 262,174 272,176 284,168 296,170 308,162 322,164 336,156 350,162 368,156"],
  ["C", "236,76 254,78 268,72 280,76 300,68 320,68"],
  ["C", "242,66 256,74 268,66"],
  ["C", "550,56 562,58 570,54 580,60"],
  ["C", "102,280 106,288 100,296 110,300"],
  ["C", "264,404 272,414 280,420 290,436 292,446"],
  ["C", "312,450 320,454 328,452 330,462 318,464 326,470"],
  ["C", "208,292 214,298 224,292 228,302 234,298"],
  ["D", "0,134 14,130 20,138 10,142 22,150"],
  ["D", "40,148 50,144 56,154 66,148"],
  ["D", "164,58 190,60 206,68"],
  ["D", "168,62 196,66"],
  ["D", "240,92 250,86 262,90"],
  ["D", "516,140 530,136 542,142 556,140"],
  ["D", "722,162 730,172 738,162"],
  ["D", "688,256 692,266 684,272"],
  ["D", "446,516 452,510 464,516 458,522 470,518"],
  ["D", "370,532 380,536 374,546"],
  ["E", "194,670 204,676 196,684 208,690 198,698 212,704"],
  ["E", "204,716 216,712 222,722 232,716 236,728 244,722 248,734"],
  ["E", "216,706 224,716 214,726 230,730 238,740"],
  ["E", "216,92 224,98 220,106 226,104"],
  ["E", "274,98 284,102 296,96 292,106"],
  ["E", "214,652 218,646 212,640"],
  ["G", "412,484 420,492 424,480 430,488"],
  ["G", "500,436 508,432 514,442"],
  ["G", "420,184 428,196 420,200 434,202 428,212 440,216 434,226"],
  ["G", "412,178 420,186 430,184"],
  ["G", "484,328 492,336 480,344 494,350"],
  ["G", "356,284 366,278 360,272"],
  ["G", "172,88 182,96 176,104 188,104 186,92"],
];

/* Short strokes for islets too small to carry an outline. */
const ISLETS: Run[] = [
  ["A", "44,340 47,340"], ["A", "79,255 81,256"], ["A", "175,630 178,632"], ["A", "187,636 190,637"], ["A", "195,640 200,643"],
  ["A", "615,64 622,65"], ["A", "572,88 577,90"], ["A", "80,980 83,982"], ["A", "50,1276 53,1277"],
  ["B", "14,66 22,64"], ["B", "26,78 36,79"], ["B", "537,469 539,470"], ["B", "559,476 561,477"], ["B", "620,525 624,526"],
  ["B", "614,566 616,568"], ["B", "624,570 626,571"], ["B", "632,568 635,570"], ["B", "644,566 647,562"], ["B", "683,152 686,152"],
  ["B", "194,618 198,624"], ["B", "204,628 205,630"], ["B", "207,640 209,641"], ["E", "274,100 286,96"], ["E", "573,52 575,54"],
  ["C", "82,153 87,152"], ["C", "95,237 97,239"], ["C", "134,255 136,260"], ["C", "166,461 170,458"], ["C", "176,457 178,456"],
  ["C", "280,288 284,282"], ["C", "608,54 626,55"], ["C", "20,525 24,526"], ["C", "304,470 312,486"], ["C", "328,456 330,476"],
  ["D", "46,68 54,68"], ["D", "68,57 74,56"], ["D", "148,52 158,53"], ["D", "86,109 88,109"], ["D", "186,94 194,95"],
  ["D", "268,82 276,83"], ["D", "576,96 582,97"], ["D", "482,106 484,108"], ["D", "802,152 808,148"], ["D", "704,304 710,309"],
  ["D", "754,328 757,330"], ["D", "636,350 630,354"], ["D", "626,360 622,363"], ["D", "556,416 562,412"], ["D", "566,410 578,404"],
  ["D", "586,400 590,397"], ["D", "415,519 417,521"], ["D", "436,569 438,571"], ["D", "424,587 427,590"],
  ["F", "463,494 466,497"], ["F", "477,506 479,508"], ["F", "551,587 555,590"], ["F", "568,580 571,581"], ["F", "540,259 544,259"],
  ["F", "436,446 438,450"], ["F", "210,344 213,350"],
  ["G", "577,189 580,191"], ["G", "503,247 506,248"], ["G", "396,270 398,272"], ["G", "446,280 448,283"], ["G", "310,282 312,284"],
  ["G", "220,298 224,300"], ["G", "230,312 234,318"], ["G", "238,328 242,334"], ["G", "250,350 252,352"], ["G", "290,340 296,346"],
  ["G", "306,348 310,351"], ["G", "430,340 434,342"], ["G", "440,342 446,352"], ["G", "480,398 484,392"], ["G", "490,376 494,378"],
  ["G", "500,378 504,386"], ["G", "512,330 520,340"], ["G", "592,341 594,342"], ["G", "616,348 630,350"], ["G", "690,434 694,436"],
  ["G", "702,424 706,428"], ["G", "738,466 742,474"], ["G", "744,480 746,482"], ["G", "757,506 759,507"], ["G", "824,507 826,508"],
  ["G", "740,532 744,530"], ["G", "466,45 467,47"], ["G", "454,64 456,66"], ["G", "572,711 574,714"], ["G", "602,712 604,714"],
  ["G", "54,838 57,840"], ["G", "746,782 749,781"], ["G", "418,194 434,198"], ["G", "424,216 436,212"], ["G", "430,234 438,230"],
  ["G", "448,314 464,318"], ["G", "450,324 460,330"], ["G", "470,436 484,434"], ["G", "516,430 520,434"], ["G", "514,446 522,462"],
  ["G", "176,94 190,98"], ["G", "178,88 188,92"], ["G", "384,406 404,408"], ["G", "396,414 404,420"], ["G", "528,646 524,668"],
];

const closed = (runs: Run[]) => runs.map((run) => `M${trace(run)}Z`).join("");
const open = (runs: Run[]) => runs.map((run) => `M${trace(run)}`).join("");

function WorldMap() {
  return (
    <svg
      viewBox="-639 -108 4368 1638"
      className="mt-[2px] block h-auto w-full"
      role="img"
      aria-label="告警地图"
      stroke="#777"
      strokeWidth="2.4"
      strokeLinejoin="round"
    >
      <path fill="#eee" d={MAINLANDS.map((runs) => `M${trace(...runs)}Z`).join("")} />
      <path fill="#eee" d={closed(ISLANDS)} />
      <path fill="#fff" d={closed(SEAS)} />
      <path fill="none" d={open(BORDERS)} />
      <path fill="none" strokeWidth="2" d={open(INLETS)} />
      <path fill="none" strokeWidth="4" d={open(ISLETS)} />
      <path fill="#ff8000" stroke="#8a6a44" d={closed(CHINA)} />
    </svg>
  );
}

function Card({ className = "", children }: { className?: string; children: React.ReactNode }) {
  return <section className={`rounded border border-[#dcdfe2] bg-white px-[15px] ${className}`}>{children}</section>;
}

const HEADING = "text-[23px] leading-[29px] font-[350] text-[#33404f]";

const STATS = [
  { value: 38, label: "今日告警总数", tone: "border-[#2f86dd] bg-[#3399ff]" },
  { value: 1, label: "当前告警数", tone: "border-[#d99e1c] bg-[#f9b115]" },
  { value: 0, label: "紧急告警数", tone: "border-[#cf4d4f] bg-[#e55353]" },
];

const COLUMNS = [
  { title: "云账号", width: "w-[7%]" },
  { title: "发生时间", width: "w-[18.1%]" },
  { title: "告警对象", width: "w-[21.4%]" },
  { title: "告警内容", width: "w-[25%]" },
  { title: "告警状态", width: "w-[8.3%]" },
  { title: "策略名称", width: "w-[20.2%]" },
];

const ROW = ["2022-10-19 16:45:00", "rm-bp1y7116yp2g3711a", "DiskUsage#60 - Average - 70", "未恢复", "非gamedb磁盘告警70%"];

const PAGES = ["首页", "上一页", "下一页", "尾页"];

export default function App() {
  return (
    <main className="min-h-screen bg-[#ebedee] pt-[22px] pr-[13px] pb-[17px] pl-[11px] font-['Noto_Sans','Noto_Sans_CJK_SC',sans-serif] text-base text-[#3a4757]">
      <Card className="pt-[15px] pb-6">
        <h1 className={HEADING}>告警大盘</h1>
      </Card>

      <div className="mt-[23px] grid grid-cols-3 gap-6">
        {STATS.map((s) => (
          <section key={s.label} className={`rounded border px-[15px] py-4 text-white ${s.tone}`}>
            <div className="text-[25px] leading-[34px] font-bold">{s.value}</div>
            <div className="mt-1 text-sm leading-5 font-medium text-white/60">{s.label}</div>
            <div className="mt-4 h-1 overflow-hidden rounded-full bg-white/20">
              <div className="h-full w-1/4 bg-white" />
            </div>
          </section>
        ))}
      </div>

      <Card className="mt-4 pt-[14px] pb-4">
        <h2 className={HEADING}>告警地图</h2>
        <WorldMap />
      </Card>

      <Card className="relative mt-6 pt-[14px] pb-[17px]">
        <h2 className={HEADING}>当前告警列表</h2>
        <table className="mt-[5px] w-full table-fixed border-collapse text-left leading-[23px]">
          <thead>
            <tr className="border-b border-[#d8dbe0]">
              {COLUMNS.map((c) => (
                <th key={c.title} scope="col" className={`p-2 font-bold ${c.width}`}>
                  {c.title}
                </th>
              ))}
            </tr>
          </thead>
          <tbody>
            <tr className="border-b border-[#d8dbe0] bg-[#f1f1f1]">
              <td className="relative py-2 pl-[26px]">
                阿里
                <span className="absolute top-2 left-1 flex h-5 w-[34px] overflow-hidden rounded-l-md">
                  <span className="w-5 bg-[#dadada]" />
                  <span className="w-2 bg-[#cfcfd0]" />
                  <span className="w-2 bg-[#bfc0c2]" />
                </span>
              </td>
              {ROW.map((text) => (
                <td key={text} className="p-2 whitespace-nowrap">
                  {text}
                </td>
              ))}
            </tr>
          </tbody>
        </table>
        <div className="mt-[6px] flex items-start justify-between">
          <p className="pt-[13px] leading-6">Showing 1 to 1 of 1 entries</p>
          <nav aria-label="分页" className="flex text-[#8a93a2]">
            {PAGES.map((p) => (
              <button
                key={p}
                type="button"
                className="-ml-px border border-[#c9cdd4] bg-white px-[11px] py-[5px] leading-[25px] first:rounded-l last:rounded-r"
              >
                {p}
              </button>
            ))}
          </nav>
        </div>
        <span className="pointer-events-none absolute right-[14px] bottom-[9px] text-lg leading-6 font-light text-[#666] [text-shadow:1px_1px_1px_#fff]">
          @稀土掘金技术社区
        </span>
      </Card>
    </main>
  );
}
